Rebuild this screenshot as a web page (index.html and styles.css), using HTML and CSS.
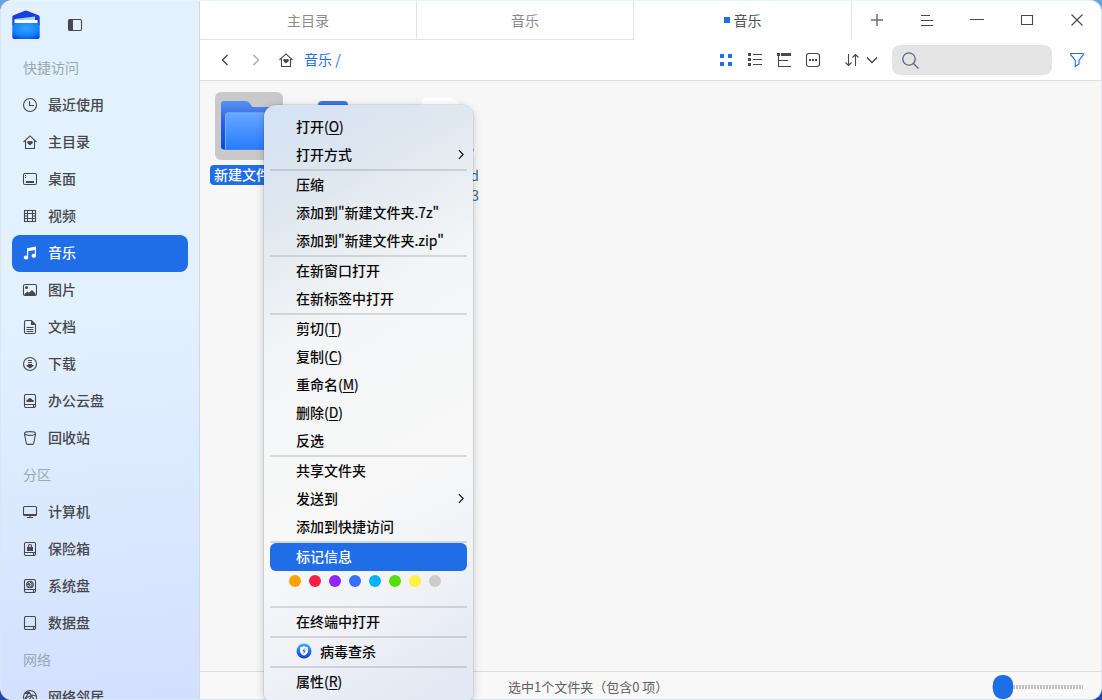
FILE: index.html
```html
<!DOCTYPE html>
<html lang="zh-CN">
<head>
<meta charset="utf-8">
<title>音乐</title>
<link rel="stylesheet" href="styles.css">
</head>
<body>
<svg class="defs" width="0" height="0">
  <defs>
    <symbol id="home" viewBox="0 0 14 14"><path d="M.5 7 7 .9 13.500 7M2.500 6v7.500h9V6" /><path class="solid" d="M7 10.600 4.200 7.900V6.700l.9-.7h1l.9.6.9-.6h1l.9.7v1.200z"/></symbol>
    <symbol id="disk" viewBox="0 0 14 14"><rect x="1.500" y=".5" width="11" height="13" rx="1.500"/><path d="M1.500 10.500h11M10.500 11v2"/></symbol>
  </defs>
</svg>
<div class="window">
  <aside class="sidebar">
    <header class="side-head">
      <svg class="logo" width="28" height="30" viewBox="0 0 28 30">
        <defs><radialGradient id="lg" cx=".5" cy=".35" r=".75"><stop offset="0" stop-color="#32a2ff"/><stop offset=".6" stop-color="#1682fb"/><stop offset="1" stop-color="#0540ec"/></radialGradient></defs>
        <path d="M.3 7Q.3 5.600 1.500 5.200L13 .8q1-.4 2 0l11.500 4.400q1.200.4 1.200 1.800v8H.3z" fill="#1a3ddc"/>
        <path d="M2.500 9 23 6.500V12H2.500z" fill="#9ed6f5"/>
        <path d="M.3 12.500h27.400V27q0 2-2 2H2.300q-2 0-2-2z" fill="url(#lg)"/><path d="M2.600 10h23v3h-23z" fill="#fff"/>
      </svg>
      <svg class="ico" width="14" height="12" viewBox="0 0 14 12"><rect x=".5" y=".5" width="13" height="11" rx="1.500"/><path class="solid" d="M.5.5h4.500v11H.5z"/></svg>
    </header>
    <nav class="places">
      <div class="group">快捷访问</div>
      <a class="place"><svg class="ico" viewBox="0 0 14 14"><circle cx="7" cy="7" r="6.500"/><path d="M6.500 3v4.500h4.500"/></svg>最近使用</a>
      <a class="place"><svg class="ico"><use href="#home"/></svg>主目录</a>
      <a class="place"><svg class="ico" viewBox="0 0 14 14"><rect x=".5" y="1.500" width="13" height="11" rx="1.500"/><path class="solid" d="M3 9h8v2H3zM2 3h1v1H2zM2 5h1v1H2z"/></svg>桌面</a>
      <a class="place"><svg class="ico" viewBox="0 0 14 14"><rect x="1.500" y="1.500" width="11" height="11"/><path d="M4.500 1.500v11M9.500 1.500v11M4.500 4.500h5M4.500 9.500h5M1.500 4.500h3M1.500 7h3M1.500 9.500h3M9.500 4.500h3M9.500 7h3M9.500 9.500h3"/></svg>视频</a>
      <a class="place active"><svg class="ico" viewBox="0 0 14 14"><path class="solid" d="M4 2.200 13 .5V10.200A2.200 2 0 1 1 11.800 8V4L5.200 5.200V12A2.200 2 0 1 1 4 9.700z"/></svg>音乐</a>
      <a class="place"><svg class="ico" viewBox="0 0 14 14"><rect x=".5" y="1.500" width="13" height="11" rx="1.500"/><circle class="solid" cx="3.500" cy="4.500" r="1.500"/><path class="solid" d="M1.500 12.500V11l3-2.500 1.500 1.200L9 7l3.500 3.500v2z"/></svg>图片</a>
      <a class="place"><svg class="ico" viewBox="0 0 14 14"><path d="M8.500.5H3Q1.500.5 1.500 2v10q0 1.500 1.500 1.500h8q1.500 0 1.500-1.500V4.500zM3.500 7.500h7M3.500 9.500h7M3.500 11.500h7"/><path class="solid" d="M8 .5v4.500h4.500z"/></svg>文档</a>
      <a class="place"><svg class="ico" viewBox="0 0 14 14"><circle cx="7" cy="7" r="6.500"/><path d="M5 3.500h4M5 5.500h4"/><path class="solid" d="M5 7h4v1h1.500v1L7 11.500 3.500 9V8H5z"/></svg>下载</a>
      <a class="place"><svg class="ico"><use href="#disk"/><path class="solid" d="M3.500 8V5.700h1.200L6.200 4l2.500.8.500.9 1.500.5V8z"/></svg>办公云盘</a>
      <a class="place"><svg class="ico" viewBox="0 0 14 14"><ellipse cx="7" cy="2.500" rx="5.500" ry="1.900"/><path d="M1.500 3 3.200 12q.3 1.400 1.500 1.400h4.600q1.200 0 1.500-1.400L12.500 3"/></svg>回收站</a>
      <div class="group">分区</div>
      <a class="place"><svg class="ico" viewBox="0 0 14 14"><rect x=".5" y="1.500" width="13" height="9" rx="1"/><path d="M7 10.500v2M4 12.500h6M1 9.500h12"/></svg>计算机</a>
      <a class="place"><svg class="ico"><use href="#disk"/><path class="solid" d="M4 5h6v4H4z"/><path d="M5.500 5V4q0-1.500 1.500-1.500T8.500 4v1"/></svg>保险箱</a>
      <a class="place"><svg class="ico"><use href="#disk"/><circle cx="7" cy="5.500" r="3.300"/><path d="M4.500 3.500 7 5.500 5.500 8M7 3l2 1.500v2L7.500 8M4 5.500h3"/></svg>系统盘</a>
      <a class="place"><svg class="ico"><use href="#disk"/></svg>数据盘</a>
      <div class="group">网络</div>
      <a class="place"><svg class="ico" viewBox="0 0 14 14"><circle cx="7" cy="7" r="6.500"/><path d="M2 3.500 6 2l6 9M6 2 2.500 8l7-3 3.500 1M9.500 5 5 11 2.500 8M5 11l6 .5"/></svg>网络邻居</a>
    </nav>
  </aside>
  <main class="main">
    <div class="tabs">
      <div class="tab">主目录</div><div class="tab">音乐</div><div class="tab current"><i></i>音乐</div>
      <div class="controls">
        <svg class="ico plus" viewBox="0 0 14 14"><path d="M7 1v12M1 7h12"/></svg>
        <svg class="ico" viewBox="0 0 14 14"><path d="M1 2.500h9M1 7.500h12M1 12.500h12"/></svg>
        <svg class="ico" viewBox="0 0 14 14"><path d="M0 6.500h14"/></svg>
        <svg class="ico" viewBox="0 0 14 14"><path d="M1.500 2.500h11v9h-11z"/></svg>
        <svg class="ico" viewBox="0 0 14 14"><path d="m1.500 1.500 11 11M12.500 1.500l-11 11"/></svg>
      </div>
    </div>
    <div class="toolbar">
      <svg class="ico back" viewBox="0 0 14 14"><path d="M9.500 2 4.500 7l5 5"/></svg>
      <svg class="ico fwd" viewBox="0 0 14 14"><path d="m4.500 2 5 5-5 5"/></svg>
      <svg class="ico"><use href="#home"/></svg>
      <span class="crumb">音乐&nbsp;/</span>
      <div class="views">
        <svg class="ico blue" viewBox="0 0 14 14"><path class="solid" d="M1 1h4v4H1zM9 1h4v4H9zM1 9h4v4H1zM9 9h4v4H9z"/></svg>
        <svg class="ico" viewBox="0 0 14 14"><path class="solid" d="M0 0h3v3H0zM0 5h3v3H0zM0 10h3v3H0z"/><path d="M5 1.500h9M5 6.500h9M5 11.500h9"/></svg>
        <svg class="ico" viewBox="0 0 14 14"><path class="solid" d="M0 0h3v3H0zM4 0h10v3H4z"/><path d="M1.500 3v10.500H14M1.500 7.500H11"/></svg>
        <svg class="ico" viewBox="0 0 14 14"><rect x=".5" y=".5" width="13" height="13" rx="2.500"/><path class="solid" d="M3 6h2v2H3zM6 6h2v2H6zM9 6h2v2H9z"/></svg>
      </div>
      <svg class="ico sort" viewBox="0 0 14 14"><path d="M3.500 1v11.500M.5 9.500l3 3 3-3M10.500 13V1.500M7.500 4.500l3-3 3 3"/></svg>
      <svg class="ico down" viewBox="0 0 14 14"><path d="m2 4.500 5 5 5-5"/></svg>
      <div class="search"><svg class="mag" width="17" height="17" viewBox="0 0 17 17"><circle cx="7" cy="7" r="6.200"/><path d="m11.500 11.500 5 5"/></svg></div>
      <svg class="ico blue filter" viewBox="0 0 14 14"><path d="M.7.500h12.600v1.200L9 7.500V11l-3.700 2.500v-6L.7 1.700z"/></svg>
    </div>
    <section class="files">
      <div class="file selected">
        <div class="thumb">
          <svg width="56" height="52" viewBox="0 0 56 52">
            <defs><linearGradient id="fb" x2="0" y2="1"><stop stop-color="#5891f5"/><stop offset=".4" stop-color="#2d63e2"/><stop offset="1" stop-color="#0b49d4"/></linearGradient><linearGradient id="ff" x2="0" y2="1"><stop stop-color="#69a8ff"/><stop offset="1" stop-color="#267bff"/></linearGradient></defs>
            <path d="M0 4q0-3 3-3h22q2 0 3.200 1.500l2 3Q31.200 7 33 7h23v42.500H3q-3 0-3-3z" fill="url(#fb)"/>
            <path d="M4 15.500q0-3 3-3h49v37H4z" fill="url(#ff)"/><path d="M4.500 49V15.500q0-2.500 2.500-2.500h49" fill="none" stroke="#75b0ff"/>
          </svg>
        </div>
        <span class="name">新建文件夹</span>
      </div>
      <div class="file second"><div class="blue-tab"></div></div>
      <div class="file third"><div class="paper"></div><div class="badge"></div><div class="tail">d<br>3</div></div>
    </section>
    <footer class="status"><span>选中1个文件夹（包含0 项）</span><div class="slider"><div class="track"></div><div class="knob"></div></div></footer>
  </main>
</div>
<div class="menu">
  <div class="item">打开<span class="latin">(<u>O</u>)</span></div>
  <div class="item">打开方式<svg class="arrow" viewBox="0 0 7 12"><path d="m1 1 5 5-5 5"/></svg></div>
  <hr>
  <div class="item">压缩</div>
  <div class="item">添加到<span class="latin">"</span>新建文件夹<span class="latin">.7z"</span></div>
  <div class="item">添加到<span class="latin">"</span>新建文件夹<span class="latin">.zip"</span></div>
  <hr>
  <div class="item">在新窗口打开</div>
  <div class="item">在新标签中打开</div>
  <hr>
  <div class="item">剪切<span class="latin">(<u>T</u>)</span></div>
  <div class="item">复制<span class="latin">(<u>C</u>)</span></div>
  <div class="item">重命名<span class="latin">(<u>M</u>)</span></div>
  <div class="item">删除<span class="latin">(<u>D</u>)</span></div>
  <div class="item">反选</div>
  <hr>
  <div class="item">共享文件夹</div>
  <div class="item">发送到<svg class="arrow" viewBox="0 0 7 12"><path d="m1 1 5 5-5 5"/></svg></div>
  <div class="item">添加到快捷访问</div>
  <hr>
  <div class="item hot">标记信息</div>
  <div class="dots"><i class="orange"></i><i class="red"></i><i class="purple"></i><i class="indigo"></i><i class="cyan"></i><i class="green"></i><i class="yellow"></i><i class="gray"></i></div>
  <hr>
  <div class="item">在终端中打开</div>
  <hr>
  <div class="item"><svg class="shield" width="16" height="16" viewBox="0 0 16 16"><defs><linearGradient id="sg" x2="0" y2="1"><stop stop-color="#35b5ff"/><stop offset="1" stop-color="#1439d6"/></linearGradient></defs><circle cx="8" cy="8" r="7.500" fill="url(#sg)"/><path d="M8 3.200 12 4.500v3.300q0 3-4 5-4-2-4-5V4.500z" fill="#fff"/><path d="M8.600 5 6.200 8.300h1.500L7.400 11 10 7.500H8.400z" fill="#1d78ee"/></svg>病毒查杀</div>
  <hr>
  <div class="item">属性<span class="latin">(<u>R</u>)</span></div>
</div>
</body>
</html>
```
FILE: styles.css
```css
* { box-sizing: border-box; }
body {
  margin: 0; height: 700px; overflow: hidden;
  background: linear-gradient(#65a4dd, #1f48b8);
  font: 14px/20px "Noto Sans CJK SC", sans-serif; color: #45484c;
}
.defs { position: absolute; }
.window { display: flex; height: 700px; border-radius: 12px; overflow: hidden; border: 1px solid #d8e6f8; border-top-color: #e9f3fe; background: #fff; }
.ico { width: 14px; height: 14px; flex: none; display: block; fill: none; stroke: currentColor; stroke-width: 1.1; overflow: visible; }
.solid { fill: currentColor; stroke: none; }
.blue { color: #1f6ee7; }

.sidebar { width: 199px; flex: none; border-right: 1px solid #ced9ea; background: linear-gradient(175deg, #e3f1ff 0%, #e3f0fe 45%, #dceaff 68%, #d3dfff 100%); }
.side-head { height: 49px; padding: 9px 0 0 11px; display: flex; gap: 28px; }
.side-head .ico { width: 14px; height: 12px; margin-top: 9px; }
.group, .place { height: 37px; display: flex; align-items: center; padding-bottom: 4px; }
.group { padding-left: 22px; color: #9ba7b3; }
.place { margin: 0 11px; padding-left: 11px; gap: 11px; border-radius: 8px; font-weight: 500; }
.place .ico { margin-top: 3px; }
.place.active { background: #1f6ee7; color: #fff; }

.main { flex: 1; display: flex; flex-direction: column; min-width: 0; }
.tabs { height: 39px; display: flex; flex: none; }
.tab { width: 217px; display: flex; align-items: center; justify-content: center; padding-bottom: 1px; border-right: 1px solid #e4e4e4; border-bottom: 1px solid #e4e4e4; color: #8c8c8c; }
.tab:not(.current) { padding-bottom: 0; }
.tab.current { width: 218px; padding-bottom: 2px; border-bottom: 0; gap: 4px; color: #505050; }
.tab i { width: 6px; height: 6px; background: #1f6ee7; }
.controls { display: flex; align-items: center; gap: 36px; padding: 0 0 1px 18px; }
.plus { stroke-width: 1.5; color: #6c6c6c; }
.toolbar { height: 41px; flex: none; display: flex; align-items: center; padding-left: 18px; border-bottom: 1px solid #dfdfdf; }
.back { margin-right: 17px; stroke-width: 1.4; }
.fwd { margin-right: 16px; color: #aaa; stroke-width: 1.4; }
.crumb { width: 60px; margin-left: 11px; padding-bottom: 2px; color: #1f6ee7; }
.views { display: flex; gap: 15px; margin-left: 355px; }
.sort { margin-left: 25px; }
.down { margin-left: 6px; stroke-width: 1.4; }
.search { width: 160px; height: 30px; margin-left: 13px; border-radius: 8px; background: #e4e4e4; padding: 7px 10px; }
.mag { display: block; fill: none; stroke: #5c6678; stroke-width: 1.3; }
.filter { margin-left: 18px; }

.files { flex: 1; display: flex; padding: 11px 0 0 9px; background: #f7f7f7; overflow: hidden; }
.file { width: 80px; flex: none; display: flex; flex-direction: column; align-items: center; }
.thumb { width: 68px; height: 68px; border-radius: 6px; background: #c9c9c9; padding: 8px 6px; }
.name { width: 79px; height: 20px; margin: 5px 0 0 1px; padding-left: 4px; border-radius: 4px; background: #1f6ee7; color: #fff; font-weight: 500; line-height: 18px; white-space: nowrap; }
.blue-tab { width: 30px; height: 20px; margin-top: 9px; border-radius: 4px; background: #3c79e9; }
.file.second { margin-left: 4px; width: 82px; margin-left: 3px; }
.file.third { width: 90px; margin-left: 16px; align-items: stretch; }
.paper { width: 38px; height: 30px; margin: 6px 0 0 32px; background: #fff; border-radius: 3px 10px 0 0; }
.badge { width: 14px; height: 14px; margin: 15px 0 0 72px; border-radius: 7px; background: radial-gradient(#2669b5 0 4px, #fff 5px); }
.tail { margin: 8px 1px 0 0; text-align: right; color: #3c6798; }

.status { height: 28px; flex: none; display: flex; align-items: center; border-top: 1px solid #dcdcdc; background: #f8f8f8; padding: 2px 18px 0 308px; justify-content: space-between; font-size: 13px; color: #606060; }
.slider { width: 91px; height: 24px; margin-top: 1px; display: grid; align-items: center; }
.slider > * { grid-area: 1 / 1; }
.track { height: 4px; background: repeating-linear-gradient(90deg, #bebebe 0 2px, transparent 2px 3px); }
.knob { width: 20px; height: 24px; margin-left: 1px; border-radius: 9px; background: #1f6ee7; }

.menu {
  position: absolute; left: 264px; top: 105px; width: 209px; height: 599px; padding: 8px 6px;
  border-radius: 12px; box-shadow: 0 0 0 1px rgba(0,0,0,.07), 0 2px 10px rgba(0,0,0,.2);
  background: linear-gradient(150deg, #d4e2f4 0%, #dfe7ef 16%, #f3f5f6 35%, #f8f8f8 62%, #f1f3f7 77%, #e3e8f4 95%);
  color: #080808; font-weight: 500;
}
.menu hr { height: 2px; margin: 0; border: 0; background: rgba(0,0,0,.12); }
.item { height: 28px; padding: 0 3px 2px 26px; display: flex; align-items: center; border-radius: 6px; white-space: nowrap; }
.latin { font-weight: 400; -webkit-text-stroke: .2px currentColor; letter-spacing: -.1px; }
.item u { text-underline-offset: 2px; }
.hot { background: #1f6ee7; color: #fff; }
.arrow { width: 6px; height: 11px; margin-left: auto; fill: none; stroke: currentColor; stroke-width: 1.3; }
.dots { height: 35px; padding: 4px 0 0 19px; display: flex; gap: 8px; }
.dots i { width: 12px; height: 12px; border-radius: 50%; }
.orange { background: #ffa200; } .red { background: #ff1d48; } .purple { background: #9424ff; } .indigo { background: #3570ff; }
.cyan { background: #00b2ff; } .green { background: #58dd0b; } .yellow { background: #fff03f; } .gray { background: #cbcbcb; }
.shield { margin-right: 8px; }
```
